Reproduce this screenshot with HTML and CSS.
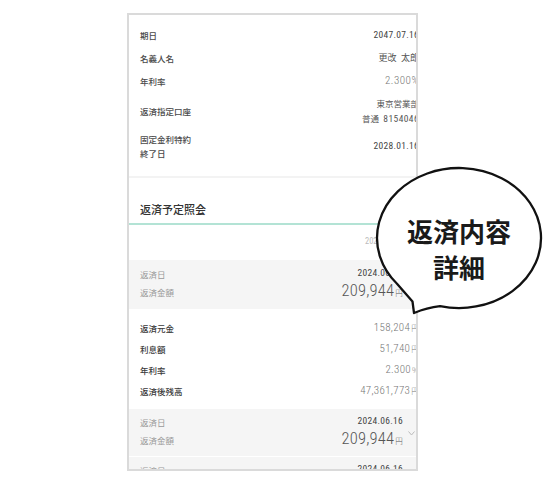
FILE: index.html
```html
<!DOCTYPE html>
<html lang="ja">
<head>
<meta charset="utf-8">
<title>返済予定照会</title>
<link rel="stylesheet" href="styles.css">
</head>
<body>
<div class="frame">
  <div class="screen">
    <section class="info">
      <div class="row r23"><span class="lbl">期日</span><span class="val date">2047.07.16</span></div>
      <div class="row r23"><span class="lbl">名義人名</span><span class="val jp">更改&ensp;太郎</span></div>
      <div class="row r23"><span class="lbl">年利率</span><span class="val num">2.300%</span></div>
      <div class="row r37"><span class="lbl">返済指定口座</span><span class="val jp acct">東京営業部<br>普通&ensp;<span class="acno">8154046</span></span></div>
      <div class="row r33"><span class="lbl two">固定金利特約<br>終了日</span><span class="val date">2028.01.16</span></div>
    </section>
    <section class="schedule">
      <h2 class="sec-title">返済予定照会</h2>
      <div class="col-head">2024.05.16</div>
      <div class="pay first">
        <div class="pay-l"><div class="pl1">返済日</div><div class="pl2">返済金額</div></div>
        <div class="pay-r"><div class="pv1">2024.06.16</div><div class="pv2">209,944<span class="yen">円</span></div></div>
        <span class="chev"><svg width="7" height="5" viewBox="0 0 7 5"><polyline points="0.5,4.5 3.5,1 6.5,4.5" fill="none" stroke="#bbb" stroke-width="1"/></svg></span>
      </div>
      <div class="detail">
        <div class="drow"><span class="dl">返済元金</span><span class="dv">158,204<span class="yen">円</span></span></div>
        <div class="drow"><span class="dl">利息額</span><span class="dv">51,740<span class="yen">円</span></span></div>
        <div class="drow"><span class="dl">年利率</span><span class="dv">2.300<span class="yen">%</span></span></div>
        <div class="drow"><span class="dl">返済後残高</span><span class="dv">47,361,773<span class="yen">円</span></span></div>
      </div>
      <div class="pay">
        <div class="pay-l"><div class="pl1">返済日</div><div class="pl2">返済金額</div></div>
        <div class="pay-r"><div class="pv1">2024.06.16</div><div class="pv2">209,944<span class="yen">円</span></div></div>
        <span class="chev"><svg width="7" height="5" viewBox="0 0 7 5"><polyline points="0.5,0.5 3.5,4 6.5,0.5" fill="none" stroke="#bbb" stroke-width="1"/></svg></span>
      </div>
      <div class="pay next">
        <div class="pay-l"><div class="pl1">返済日</div><div class="pl2">返済金額</div></div>
        <div class="pay-r"><div class="pv1">2024.06.16</div><div class="pv2">209,944<span class="yen">円</span></div></div>
        <span class="chev"><svg width="7" height="5" viewBox="0 0 7 5"><polyline points="0.5,0.5 3.5,4 6.5,0.5" fill="none" stroke="#bbb" stroke-width="1"/></svg></span>
      </div>
    </section>
  </div>
</div>
<svg class="bubble" width="546" height="486" viewBox="0 0 546 486">
  <path d="M 440 306.1 A 82 70 0 1 0 397 283.8 L 412.5 301.5 L 414 313 Q 427 307.5 440 306.1 Z" fill="#fff" stroke="#111" stroke-width="2.3" stroke-linejoin="round" stroke-linecap="round"/>
</svg>
<div class="bubble-text">返済内容<br>詳細</div>
</body>
</html>
```
FILE: styles.css
```css
html, body {
  margin: 0;
  padding: 0;
  background: #fff;
}
body {
  position: relative;
  width: 546px;
  height: 486px;
  overflow: hidden;
  font-family: "Noto Sans CJK JP", sans-serif;
}
.frame {
  margin: 13px 0 0 127px;
  width: 287px;
  height: 454px;
  border: 2px solid #dadada;
  overflow: hidden;
}
.screen {
  width: 300px;
}
.info {
  padding: 8px 10px 14px 11px;
  border-bottom: 2px solid #f3f3f3;
}
.row {
  display: flex;
  justify-content: space-between;
  align-items: center;
}
.r23 { height: 23px; }
.r37 { height: 37px; }
.r33 { height: 33px; }
.lbl {
  font-size: 8.5px;
  color: #4a4a4a;
  font-weight: 500;
  line-height: 14px;
}
.val {
  text-align: right;
  color: #555;
}
.date, .num, .acno, .pv1, .pv2, .dv, .col-head {
  font-family: "Roboto Condensed", Roboto, "Noto Sans CJK JP", sans-serif;
  font-stretch: 85%;
}
.date {
  font-size: 9.5px;
  font-weight: 400;
  color: #444;
  letter-spacing: 0.3px;
}
.jp {
  font-size: 9px;
  line-height: 15px;
}
.acct { font-size: 8.5px; }
.acno {
  font-size: 9.5px;
  letter-spacing: 0.4px;
}
.num {
  font-size: 11px;
  font-weight: 300;
  color: #777;
  letter-spacing: 0.5px;
}
.sec-title {
  margin: 0;
  padding: 24px 11px 7px;
  font-size: 11px;
  line-height: 14px;
  font-weight: 500;
  color: #333;
  border-bottom: 2px solid #b3e3d5;
}
.col-head {
  padding: 9px 26px 12px 0;
  font-size: 8.5px;
  line-height: 14px;
  color: #bbb;
  text-align: right;
}
.pay {
  display: flex;
  align-items: center;
  background: #f5f5f5;
  padding: 5px 10px 4px 11px;
}
.pay.first { padding: 6px 10px 5px 11px; }
.pay.next { border-top: 1px solid #fff; }
.pay-l { flex: 1; }
.pl1, .pl2 {
  font-size: 8.5px;
  color: #999;
}
.pl1 { line-height: 14px; }
.pl2 { line-height: 22px; }
.pay-r { text-align: right; color: #555; }
.pv1 {
  font-size: 9.5px;
  line-height: 14px;
  font-weight: 400;
  color: #444;
  letter-spacing: 0.3px;
}
.pv2 {
  font-size: 16.5px;
  line-height: 22px;
  font-weight: 300;
  letter-spacing: 0.2px;
}
.yen {
  font-family: "Noto Sans CJK JP", sans-serif;
  font-size: 7.5px;
  margin-left: 1px;
}
.chev {
  width: 16px;
  display: flex;
  justify-content: center;
  align-items: center;
}
.detail {
  padding: 8px 10px 8px 11px;
}
.drow {
  display: flex;
  justify-content: space-between;
  align-items: center;
  height: 21px;
}
.dl {
  font-size: 8.5px;
  color: #3a3a3a;
  font-weight: 500;
}
.dv {
  font-size: 11px;
  font-weight: 300;
  color: #777;
  letter-spacing: 0.3px;
}
.bubble {
  position: absolute;
  left: 0;
  top: 0;
}
.bubble-text {
  position: absolute;
  left: 379px;
  top: 213px;
  width: 160px;
  text-align: center;
  font-size: 26px;
  line-height: 36px;
  font-weight: 700;
  color: #1a1a1a;
  font-family: "Noto Sans CJK JP", sans-serif;
}
```
